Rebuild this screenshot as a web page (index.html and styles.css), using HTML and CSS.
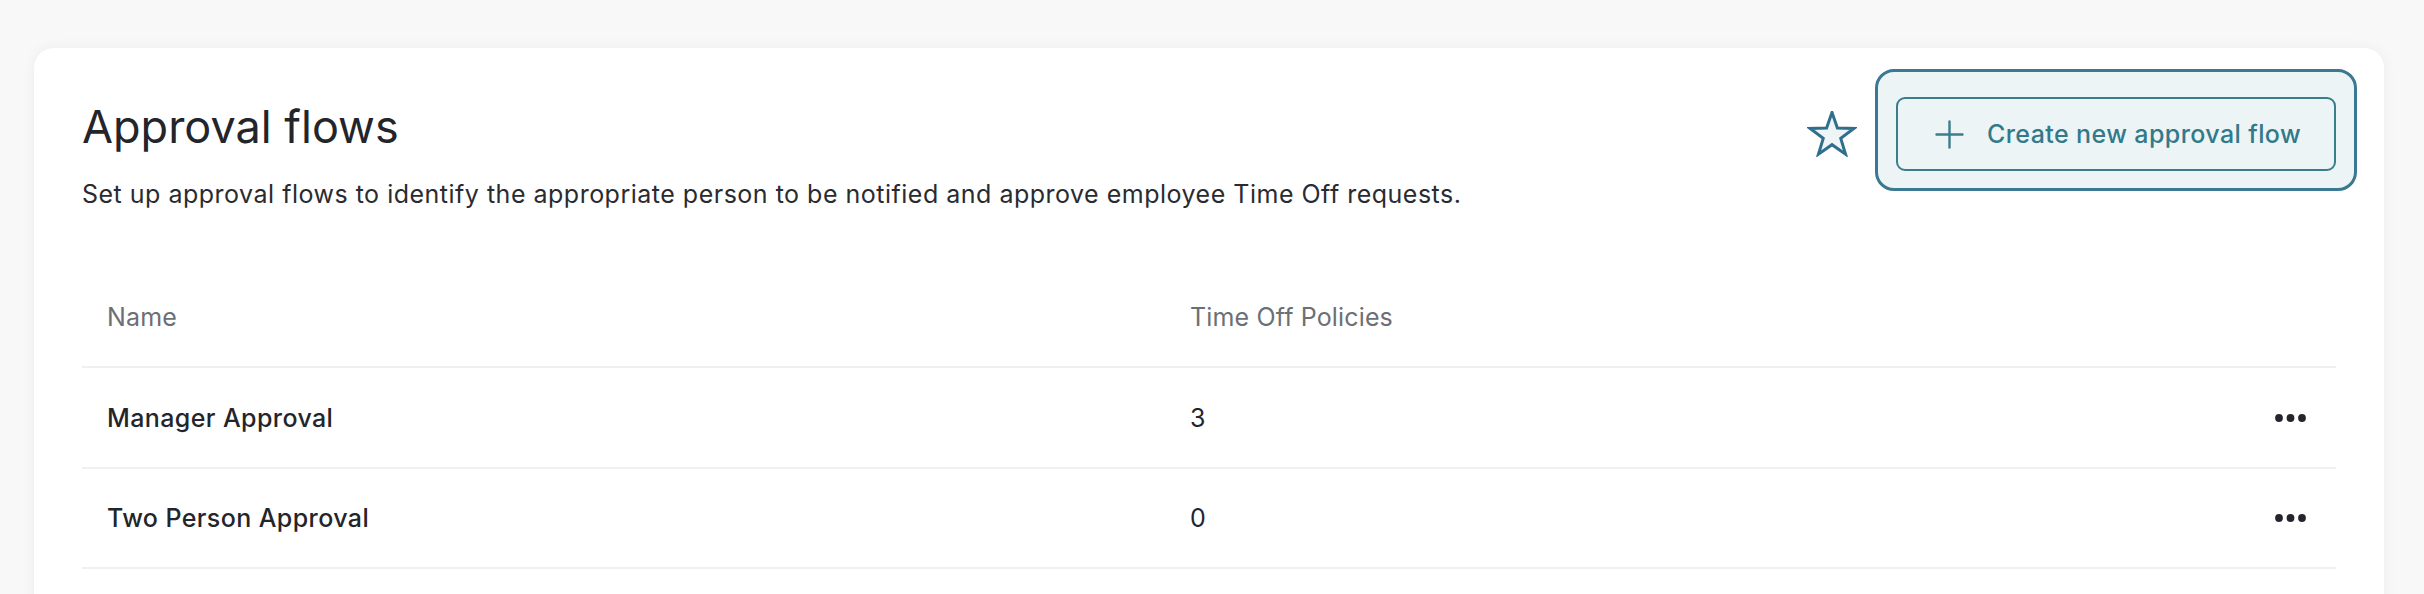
FILE: index.html
```html
<!DOCTYPE html>
<html lang="en">
<head>
<meta charset="utf-8">
<title>Approval flows</title>
<link rel="stylesheet" href="styles.css">
</head>
<body>
<main class="card">
  <header class="page-header">
    <div class="heading">
      <h1 class="title">Approval flows</h1>
      <p class="subtitle">Set up approval flows to identify the appropriate person to be notified and approve employee Time Off requests.</p>
    </div>
    <div class="actions">
      <svg class="star" width="50" height="46" viewBox="0 0 50 46" aria-hidden="true">
        <polygon points="25,1.5 30.41,17.06 46.87,17.39 33.75,27.34 38.52,43.11 25,33.7 11.48,43.11 16.25,27.34 3.13,17.39 19.59,17.06" fill="#edf5f7" stroke="#2f6e8d" stroke-width="3" stroke-linejoin="miter"/>
      </svg>
      <div class="focus-ring">
        <button class="btn" type="button">
          <svg class="plus" width="29" height="29" viewBox="0 0 29 29" aria-hidden="true">
            <path d="M14.5 1.5v26M1.5 14.5h26" stroke="#3a7d8b" stroke-width="2.4" stroke-linecap="round" fill="none"/>
          </svg>
          <span>Create new approval flow</span>
        </button>
      </div>
    </div>
  </header>

  <div class="table">
    <div class="row head">
      <div class="cell">Name</div>
      <div class="cell">Time Off Policies</div>
      <div class="cell"></div>
    </div>
    <div class="row first">
      <div class="cell name">Manager Approval</div>
      <div class="cell">3</div>
      <div class="cell menu">
        <svg width="32" height="10" viewBox="0 0 32 10" aria-hidden="true"><circle cx="4" cy="5" r="3.9"/><circle cx="15.5" cy="5" r="3.9"/><circle cx="27" cy="5" r="3.9"/></svg>
      </div>
    </div>
    <div class="row">
      <div class="cell name">Two Person Approval</div>
      <div class="cell">0</div>
      <div class="cell menu">
        <svg width="32" height="10" viewBox="0 0 32 10" aria-hidden="true"><circle cx="4" cy="5" r="3.9"/><circle cx="15.5" cy="5" r="3.9"/><circle cx="27" cy="5" r="3.9"/></svg>
      </div>
    </div>
  </div>
</main>
</body>
</html>
```
FILE: styles.css
```css
* { box-sizing: border-box; }

html, body {
  margin: 0;
  height: 100%;
  overflow: hidden;
}

body {
  background: #f8f8f8;
  font-family: Inter, "Liberation Sans", sans-serif;
  color: #24252b;
  padding: 48px 40px 0 34px;
}

.card {
  background: #ffffff;
  border-radius: 20px;
  box-shadow: 0 0 14px rgba(0, 0, 0, 0.05);
  padding: 49px 48px 60px 48px;
  min-height: 700px;
}

.page-header {
  display: flex;
  justify-content: space-between;
  align-items: flex-start;
}

.title {
  margin: 0;
  font-size: 45px;
  font-weight: 400;
  line-height: 60px;
  color: #24252b;
}

.subtitle {
  margin: 19px 0 0 0;
  font-size: 25px;
  line-height: 36px;
  letter-spacing: 0.5px;
  color: #2a2b31;
}

.actions {
  display: flex;
  align-items: center;
  gap: 18px;
}

.star {
  display: block;
}

.focus-ring {
  margin: -28px -21px -20px 0;
  padding: 25px 18px 17px 18px;
  border: 3px solid #3b7891;
  border-radius: 19px;
  background: #ecf4f6;
}

.btn {
  display: flex;
  align-items: center;
  gap: 23px;
  width: 440px;
  height: 74px;
  padding: 0 0 0 37px;
  border: 2px solid #3a7d8b;
  border-radius: 9px;
  background: #ecf4f6;
  font-family: Inter, "Liberation Sans", sans-serif;
  font-size: 25px;
  font-weight: 500;
  letter-spacing: 0.4px;
  color: #32798a;
  cursor: pointer;
}

.plus { display: block; flex: none; }

.table {
  margin-top: 56px;
}

.row {
  display: grid;
  grid-template-columns: 1083px 1fr auto;
  align-items: center;
  height: 100px;
  border-bottom: 2px solid #f0f0f0;
}

.row.first {
  height: 101px;
}

.cell {
  padding-left: 25px;
  font-size: 25px;
  line-height: 36px;
  color: #24252b;
}

.head .cell {
  color: #6c6f74;
  font-weight: 400;
  letter-spacing: 0.15px;
}

.cell.name {
  font-weight: 500;
  letter-spacing: 0.4px;
}

.cell.menu {
  padding: 0 29px 0 0;
  display: flex;
  align-items: center;
}

.cell.menu svg {
  display: block;
  fill: #25262d;
}
```
